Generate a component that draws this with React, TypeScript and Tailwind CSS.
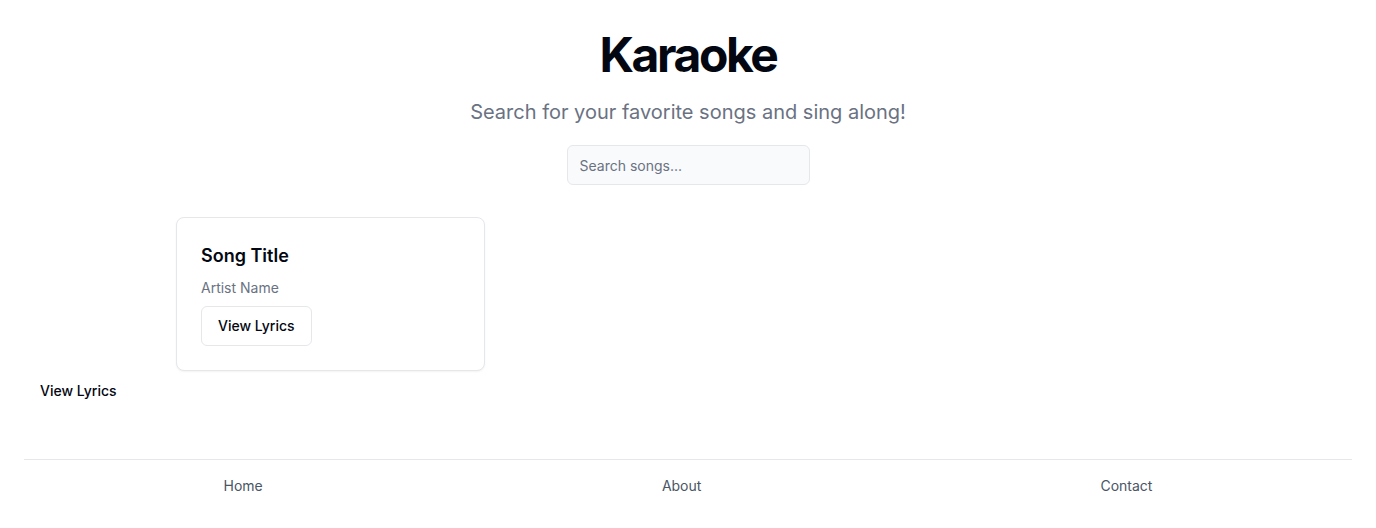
import React from "react";

const SongCard: React.FC<{ title: string; artist: string }> = ({ title, artist }) => {
    return (
        <div className="w-[309px] rounded-lg border border-gray-200 bg-white p-6 shadow-xs">
            <h2 className="text-lg font-semibold text-gray-950">{title}</h2>
            <p className="mt-2 text-sm text-gray-500">{artist}</p>
            <button
                type="button"
                className="mt-2 h-10 rounded-md border border-gray-200 bg-white px-4 text-sm font-medium text-gray-950"
            >
                View Lyrics
            </button>
        </div>
    );
};

export default function App() {
    return (
        <div className="min-h-screen bg-white font-['Inter',sans-serif] text-gray-950">
            <main className="flex flex-col items-center pt-[31px]">
                <h1 className="text-5xl font-bold leading-none tracking-tighter">Karaoke</h1>
                <p className="mt-[19px] text-xl text-gray-500">Search for your favorite songs and sing along!</p>
                <input
                    type="text"
                    placeholder="Search songs..."
                    className="mt-[19px] h-10 w-[243px] rounded-md border border-gray-200 bg-gray-50 px-3 text-sm placeholder:text-gray-500"
                />
                <div className="mt-8 w-full max-w-5xl">
                    <SongCard title="Song Title" artist="Artist Name" />
                </div>
            </main>
            <div className="mt-[10px] px-10 text-sm font-medium">View Lyrics</div>
            <footer className="mx-6 mt-[58px] flex justify-around border-t border-gray-200 py-4 text-sm text-gray-600">
                <a href="#">Home</a>
                <a href="#">About</a>
                <a href="#">Contact</a>
            </footer>
        </div>
    );
}
